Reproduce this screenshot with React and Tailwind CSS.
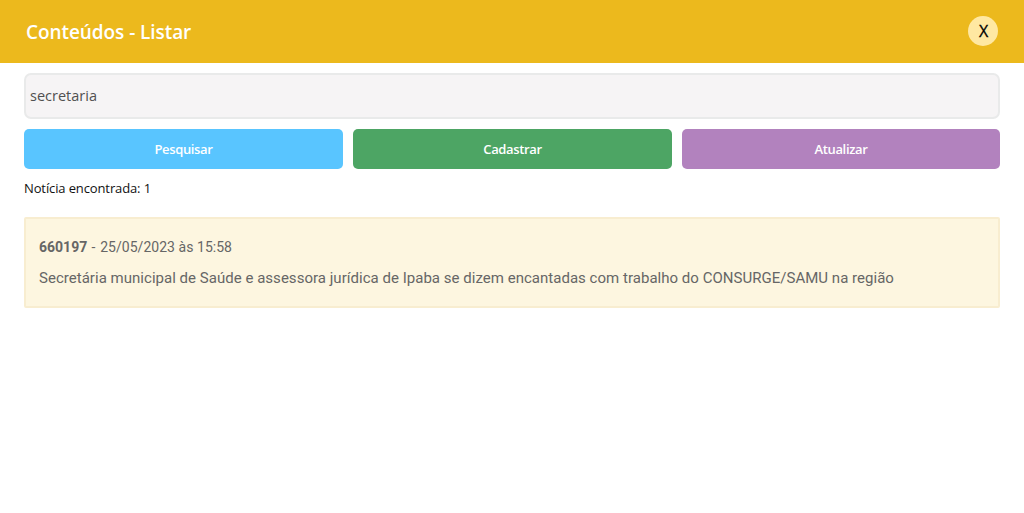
import { useState } from 'react';

function App() {
  const [search, setSearch] = useState('secretaria');

  const news = [
    {
      id: 660197,
      date: '25/05/2023 às 15:58',
      title: 'Secretária municipal de Saúde e assessora jurídica de Ipaba se dizem encantadas com trabalho do CONSURGE/SAMU na região',
    },
  ];

  return (
    <div className="min-h-screen bg-white font-['Open_Sans',sans-serif]">
      <header className="h-[63px] bg-[#ecb91d] flex items-start justify-between px-[26px] pt-4">
        <h1 className="text-white text-[19px] leading-8 font-semibold tracking-[-0.07px]">Conteúdos - Listar</h1>
        <button className="w-[30px] h-[30px] pl-px rounded-full bg-[#ffe8a2] text-black text-base [-webkit-text-stroke:0.3px_black] flex items-center justify-center">
          X
        </button>
      </header>

      <main className="px-6 pt-[10px]">
        <input
          type="text"
          value={search}
          onChange={(e) => setSearch(e.target.value)}
          className="block w-full h-[46px] px-1 pb-[2px] rounded-[7px] border-2 border-[#e9eaea] bg-[#f6f4f5] text-[#505050] text-[14.5px] focus:outline-none"
        />

        <div className="grid grid-cols-[319px_319px_318px] gap-[10px] mt-[10px] text-white text-[13px] font-semibold tracking-[-0.35px]">
          <button className="h-10 pt-px rounded-[5px] bg-[#59c5ff]">Pesquisar</button>
          <button className="h-10 pt-px rounded-[5px] bg-[#4da564]">Cadastrar</button>
          <button className="h-10 pt-px rounded-[5px] bg-[#b282be]">Atualizar</button>
        </div>

        <p className="mt-[9px] text-[13px] leading-5 tracking-[-0.12px] text-[#111]">Notícia encontrada: {news.length}</p>

        <ul className="mt-[19px] font-[Roboto,sans-serif] text-[#666]">
          {news.map((item) => (
            <li key={item.id} className="h-[91px] border-2 border-[#f8edd0] rounded-[2px] bg-[#fdf6e0] px-[13px] pt-[18px]">
              <p className="text-sm leading-5 tracking-[0.04px]">
                <strong className="font-bold tracking-normal">{item.id}</strong>
                <span className="tracking-[0.7px]"> - </span>
                {item.date}
              </p>
              <p className="text-[15px] leading-5 mt-[11px] tracking-[0.025px]">{item.title}</p>
            </li>
          ))}
        </ul>
      </main>
    </div>
  );
}

export default App;
